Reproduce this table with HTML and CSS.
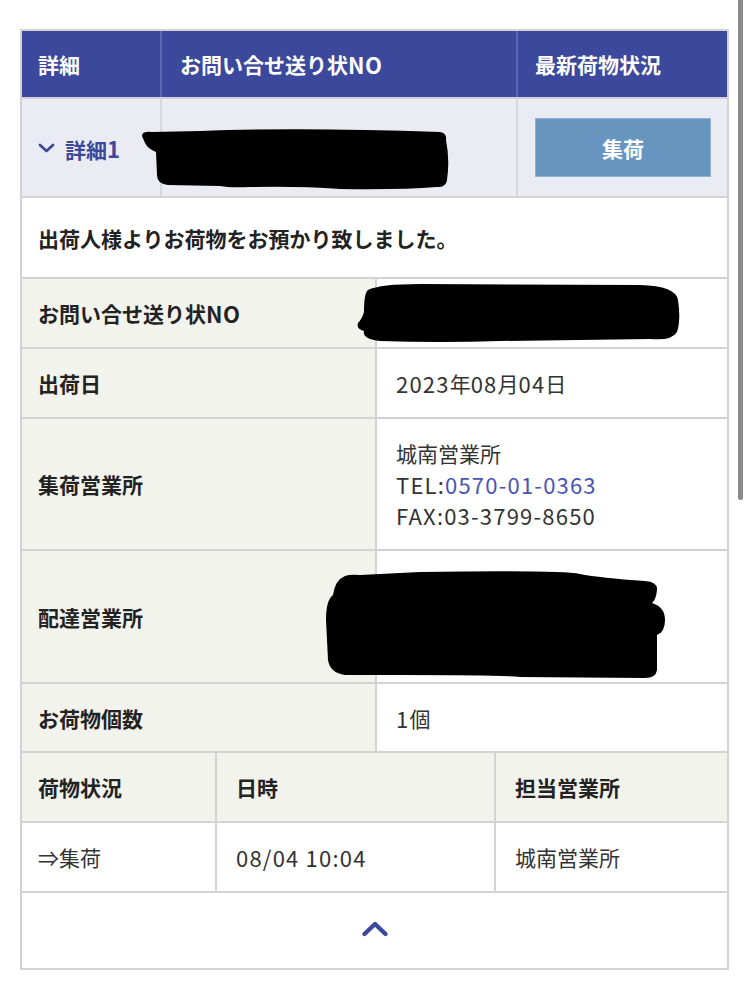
FILE: index.html
```html
<!DOCTYPE html>
<html lang="ja">
<head>
<meta charset="utf-8">
<title>お問い合せ結果</title>
<link rel="stylesheet" href="styles.css">
</head>
<body>
<div class="card">
  <div class="row head">
    <div class="cell c1">詳細</div>
    <div class="cell c2">お問い合せ送り状<span class="lat">NO</span></div>
    <div class="cell c3">最新荷物状況</div>
  </div>
  <div class="row sum">
    <div class="cell c1 toggle">
      <svg class="chev-down" width="17" height="10" viewBox="0 0 17 10"><path d="M2 2 L8.5 8 L15 2" fill="none" stroke="#3b489b" stroke-width="2.8" stroke-linecap="round" stroke-linejoin="round"/></svg>
      <span>詳細<span class="lat">1</span></span>
    </div>
    <div class="cell c2"></div>
    <div class="cell c3"><div class="btn">集荷</div></div>
  </div>
  <div class="row msg">出荷人様よりお荷物をお預かり致しました。</div>
  <div class="row pair h70">
    <div class="label">お問い合せ送り状<span class="lat">NO</span></div>
    <div class="value"></div>
  </div>
  <div class="row pair h70">
    <div class="label">出荷日</div>
    <div class="value"><span class="num">2023</span>年<span class="num">08</span>月<span class="num">04</span>日</div>
  </div>
  <div class="row pair h132">
    <div class="label">集荷営業所</div>
    <div class="value lines">
      <div>城南営業所</div>
      <div class="num">TEL:<a class="tel" href="#">0570-01-0363</a></div>
      <div class="num">FAX:03-3799-8650</div>
    </div>
  </div>
  <div class="row pair h133">
    <div class="label">配達営業所</div>
    <div class="value"></div>
  </div>
  <div class="row pair h69">
    <div class="label">お荷物個数</div>
    <div class="value"><span class="num">1</span>個</div>
  </div>
  <div class="row status shead">
    <div class="s1">荷物状況</div>
    <div class="s2">日時</div>
    <div class="s3">担当営業所</div>
  </div>
  <div class="row status sdata">
    <div class="s1">⇒集荷</div>
    <div class="s2 num">08/04 10:04</div>
    <div class="s3">城南営業所</div>
  </div>
  <div class="row foot">
    <svg width="28" height="20" viewBox="0 0 28 20"><path d="M3.5 15 L14 5 L24.5 15" fill="none" stroke="#3b489b" stroke-width="4.4" stroke-linecap="round" stroke-linejoin="round"/></svg>
  </div>
</div>
<svg class="redact" width="749" height="999" viewBox="0 0 749 999">
  <path d="M142,136 Q142,131 152,132 L200,131 Q300,127 440,132 Q447,133 446,140 Q450,160 447,180 Q446,188 436,187 Q400,190 340,189 Q300,186 250,187 Q230,188 220,186 L168,185 Q157,184 157,175 L156,152 Q148,149 145,143 Z"/>
  <path d="M368,290 Q380,284 420,284 L640,285 Q676,286 678,300 Q681,320 677,332 Q672,341 650,339 L500,341 Q440,343 380,341 Q362,339 364,331 Q356,329 358,323 Q362,319 364,312 Q364,293 368,290 Z"/>
  <path d="M333,595 Q335,580 345,576 Q350,574 360,575 L420,572 Q560,570 580,574 Q600,578 645,581 Q658,582 657,590 Q656,600 652,603 Q665,607 665,620 Q665,632 657,635 L657,670 Q656,678 645,678 L520,677 Q500,675 400,675 L345,675 Q330,673 328,660 L326,620 Q326,600 333,595 Z"/>
</svg>
<div class="scrollbar"></div>
</body>
</html>
```

FILE: styles.css
```css
* { box-sizing: border-box; }
html, body { margin: 0; padding: 0; background: #fff; }
body {
  font-family: "Noto Sans CJK JP", "Noto Sans", sans-serif;
  font-size: 21px;
  color: #222;
  width: 749px;
  height: 999px;
  overflow: hidden;
  position: relative;
}
.card {
  width: 709px;
  margin: 29px 0 0 20px;
  border: 2px solid #d3d3d3;
}
.row {
  display: grid;
  border-bottom: 2px solid #d3d3d3;
}
.row:last-child { border-bottom: none; }
.head {
  grid-template-columns: 140px 356px 1fr;
  height: 68px;
  background: #3b489b;
  color: #fff;
  font-weight: 700;
  border-bottom-color: #cfd0dc;
}
.head .cell { border-right: 2px solid #5966b0; }
.head .c3 { border-right: none; }
.cell {
  display: flex;
  align-items: center;
  padding-left: 16px;
}
.head .c2 { padding-left: 18px; }
.head .c3 { padding-left: 17px; }
.lat { font-size: 22px; letter-spacing: 0.5px; }
.sum {
  grid-template-columns: 140px 356px 1fr;
  height: 99px;
  background: #ebebf4;
}
.sum .cell { border-right: 2px solid #d6d6de; }
.sum .c3 { border-right: none; padding-left: 17px; padding-right: 16px; }
.toggle { gap: 10px; color: #3b489b; font-weight: 700; }
.chev-down { display: block; margin-top: 1px; }
.btn {
  width: 176px;
  height: 59px;
  background: #6795bf;
  border: 1px solid #8fb0d2;
  color: #fff;
  font-weight: 700;
  display: flex;
  align-items: center;
  justify-content: center;
}
.msg {
  height: 81px;
  display: flex;
  align-items: center;
  padding-left: 16px;
  font-weight: 700;
}
.pair { grid-template-columns: 355px 1fr; }
.h70 { height: 70px; }
.h69 { height: 69px; }
.h132 { height: 132px; }
.h133 { height: 133px; }
.label {
  background: #f3f3ee;
  border-right: 2px solid #d3d3d3;
  display: flex;
  align-items: center;
  padding-left: 16px;
  font-weight: 700;
}
.value {
  display: flex;
  align-items: center;
  padding-left: 19px;
  color: #333;
}
.value.lines {
  flex-direction: column;
  align-items: flex-start;
  justify-content: center;
  line-height: 31px;
}
.num { font-size: 22px; letter-spacing: 1.2px; }
.tel { color: #4a53b3; text-decoration: none; }
.status { grid-template-columns: 195px 279px 1fr; height: 70px; }
.status > div {
  display: flex;
  align-items: center;
  padding-left: 19px;
  border-right: 2px solid #d3d3d3;
}
.status > .s1 { padding-left: 16px; }
.status > .s3 { border-right: none; }
.shead { background: #f3f3ee; font-weight: 700; }
.sdata { color: #333; }
.foot {
  height: 75px;
  display: flex;
  align-items: center;
  justify-content: center;
  padding-bottom: 4px;
}
.redact {
  position: absolute;
  left: 0;
  top: 0;
  pointer-events: none;
}
.redact path { fill: #000; }
.scrollbar {
  position: absolute;
  left: 738px;
  top: -4px;
  width: 5px;
  height: 504px;
  border-radius: 3px;
  background: #8a8a8a;
}
```
